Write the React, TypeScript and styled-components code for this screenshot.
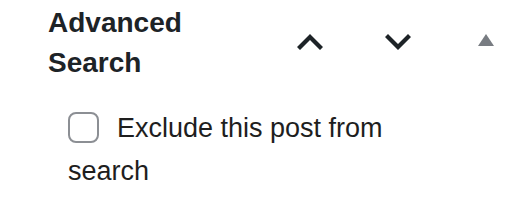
import React, { useState } from "react";
import styled, { createGlobalStyle } from "styled-components";

const GlobalStyle = createGlobalStyle`
  html, body {
    margin: 0;
    padding: 0;
    background: #ffffff;
  }
  body {
    font-family: "Liberation Sans", Arial, sans-serif;
    color: #1e1e1e;
  }
`;

const Postbox = styled.div`
  width: 530px;
  height: 216px;
  background: #ffffff;
`;

const PostboxHeader = styled.div`
  display: flex;
  align-items: center;
  min-height: 83px;
`;

const Title = styled.h2`
  flex: 1;
  align-self: flex-start;
  margin: 0;
  padding: 3px 0 0 48px;
  font-size: 28px;
  font-weight: 700;
  line-height: 40px;
  color: #1d2327;
`;

const HandleActions = styled.div`
  display: flex;
  align-items: center;
`;

const HandleButton = styled.button<{ lift?: number }>`
  display: flex;
  align-items: center;
  justify-content: center;
  width: 88px;
  height: 83px;
  padding: 0;
  padding-bottom: ${(props) => props.lift || 0}px;
  border: 0;
  background: transparent;
  cursor: pointer;
  color: #1d2327;
`;

const Inside = styled.div`
  padding: 24px 80px 0 68px;
`;

const CheckLabel = styled.label`
  display: block;
  font-size: 27px;
  line-height: 43px;
  color: #1e1e1e;
`;

const Checkbox = styled.input`
  appearance: none;
  display: inline-block;
  box-sizing: border-box;
  width: 31px;
  height: 31px;
  margin: 0 18px 0 0;
  border: 2px solid #8c8f94;
  border-radius: 8px;
  background: #ffffff;
  vertical-align: middle;
  position: relative;
  top: -2px;
`;

const Chevron = ({ down }: { down?: boolean }) => (
  <svg width="40" height="40" viewBox="0 0 20 20" fill="currentColor">
    {down ? (
      <path d="M5 6l5 5 5-5 1.5 1.5L10 14 3.5 7.5z" />
    ) : (
      <path d="M15 14l-5-5-5 5-1.5-1.5L10 6l6.5 6.5z" />
    )}
  </svg>
);

const App = () => {
  const [checked, setChecked] = useState(false);
  return (
    <Postbox>
      <GlobalStyle />
      <PostboxHeader>
        <Title>Advanced Search</Title>
        <HandleActions>
          <HandleButton aria-label="Move up">
            <Chevron />
          </HandleButton>
          <HandleButton aria-label="Move down">
            <Chevron down />
          </HandleButton>
          <HandleButton aria-label="Toggle panel" lift={3}>
            <svg width="16" height="12" viewBox="0 0 16 12">
              <polygon points="0,12 8,0 16,12" fill="#787c82" />
            </svg>
          </HandleButton>
        </HandleActions>
      </PostboxHeader>
      <Inside>
        <CheckLabel>
          <Checkbox
            type="checkbox"
            checked={checked}
            onChange={() => setChecked(!checked)}
          />
          Exclude this post from search
        </CheckLabel>
      </Inside>
    </Postbox>
  );
};

export default App;
